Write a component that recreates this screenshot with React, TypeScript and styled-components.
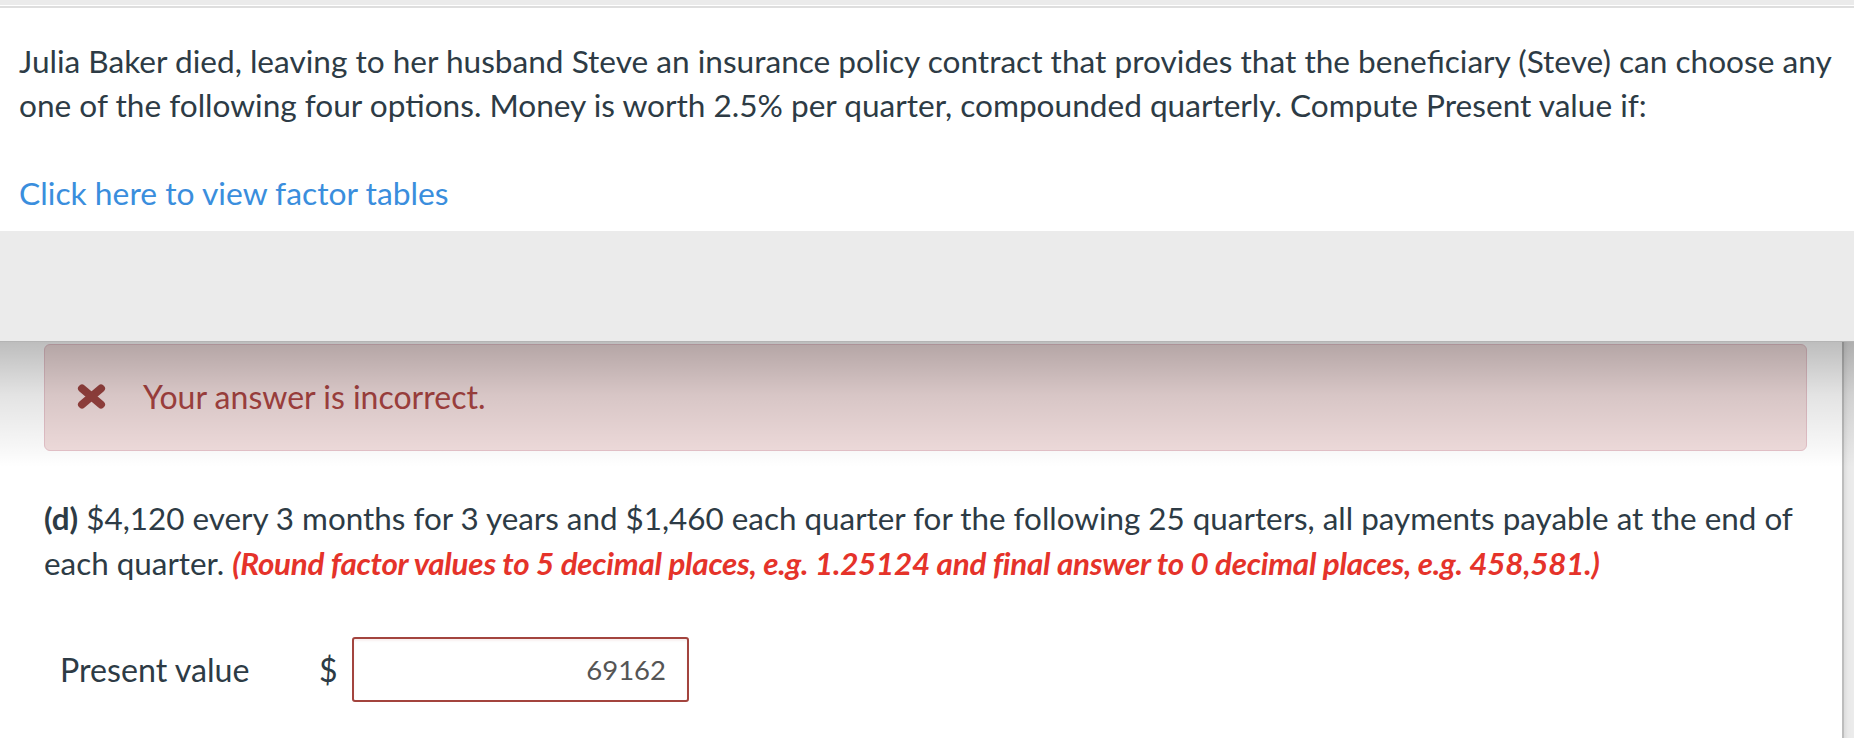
import React from "react";
import styled, { createGlobalStyle } from "styled-components";

const GlobalStyle = createGlobalStyle`
  html, body {
    margin: 0;
    padding: 0;
    background: #ffffff;
  }
  body {
    font-family: Lato, "Open Sans", "Liberation Sans", sans-serif;
    color: #2d3b45;
  }
  * { box-sizing: border-box; }
`;

const Page = styled.div`
  width: 1854px;
  height: 738px;
  overflow: hidden;
  display: flex;
  flex-direction: column;
`;

const TopStrip = styled.div`
  height: 6px;
  background: #ebebeb;
  border-bottom: 1px solid #ffffff;
`;

const Header = styled.section`
  border-top: 2px solid #dedede;
  padding: 31px 6px 16px 19px;
  background: #ffffff;
`;

const Paragraph = styled.p`
  margin: 0;
  font-size: 31.6px;
  line-height: 44px;
  color: #2d3b45;
`;

const Spacer = styled.div`
  height: 44px;
`;

const FactorLink = styled.a`
  font-size: 31.8px;
  line-height: 44px;
  color: #3a8edd;
  text-decoration: none;
  cursor: pointer;
`;

const GrayBand = styled.div`
  height: 111px;
  background: #ebebeb;
  border-bottom: 1px solid #b4b4b4;
`;

const Main = styled.div`
  position: relative;
  flex: 1;
  display: flex;
  min-height: 0;
`;

const Content = styled.div`
  flex: 1;
  padding: 2px 35px 0 44px;
`;

const Scrollbar = styled.div`
  width: 12px;
  background: linear-gradient(90deg, #dcdcdc 0, #e9e9e9 40%, #ececec 100%);
  border-left: 2px solid #bdbdbd;
`;

const ShadowOverlay = styled.div`
  position: absolute;
  top: 0;
  left: 0;
  right: 0;
  height: 125px;
  pointer-events: none;
  background: linear-gradient(
    180deg,
    rgba(0, 0, 0, 0.26) 0,
    rgba(0, 0, 0, 0.11) 53px,
    rgba(0, 0, 0, 0.03) 106px,
    rgba(0, 0, 0, 0) 125px
  );
`;

const ErrorBox = styled.div`
  height: 107px;
  display: flex;
  align-items: center;
  gap: 37px;
  padding: 0 0 2px 32px;
  background: #f2dede;
  border: 1px solid #e6c3ca;
  border-radius: 6px;
  color: #a94442;
  font-size: 32px;
`;

const ErrorIcon = styled.svg`
  width: 29px;
  height: 25px;
  flex: none;
`;

const Question = styled.p`
  margin: 45px 0 0 0;
  font-size: 31.4px;
  line-height: 45px;
  color: #2d3b45;
`;

const Strong = styled.strong`
  font-weight: 700;
`;

const Hint = styled.em`
  font-weight: 700;
  font-style: italic;
  color: #e5332a;
  letter-spacing: -0.25px;
`;

const AnswerRow = styled.div`
  margin-top: 51px;
  margin-left: 16px;
  display: flex;
  align-items: center;
`;

const AnswerLabel = styled.span`
  width: 259px;
  font-size: 32.2px;
  color: #2d3b45;
`;

const Currency = styled.span`
  font-size: 32px;
  color: #2d3b45;
  width: 33px;
`;

const AnswerInput = styled.input`
  width: 337px;
  height: 65px;
  border: 2px solid #a3443e;
  border-radius: 3px;
  background: #ffffff;
  box-shadow: inset 0 2px 2px rgba(169, 68, 66, 0.08);
  padding: 0 21px 0 10px;
  text-align: right;
  font-family: Lato, "Open Sans", "Liberation Sans", sans-serif;
  font-size: 27.5px;
  color: #555555;
  outline: none;
`;

export default function App() {
  return (
    <Page>
      <GlobalStyle />
      <TopStrip />
      <Header>
        <Paragraph>
          Julia Baker died, leaving to her husband Steve an insurance policy contract that provides that the
          beneficiary (Steve) can choose any one of the following four options. Money is worth 2.5% per quarter,
          compounded quarterly. Compute Present value if:
        </Paragraph>
        <Spacer />
        <FactorLink>Click here to view factor tables</FactorLink>
      </Header>
      <GrayBand />
      <Main>
        <Content>
          <ErrorBox>
            <ErrorIcon viewBox="0 0 29 25" aria-hidden="true">
              <path
                d="M5 4.5 L24 20.5 M24 4.5 L5 20.5"
                stroke="#9a4340"
                strokeWidth="8"
                strokeLinecap="round"
                fill="none"
              />
            </ErrorIcon>
            <span>Your answer is incorrect.</span>
          </ErrorBox>
          <Question>
            <Strong>(d)</Strong> $4,120 every 3 months for 3 years and $1,460 each quarter for the following 25
            quarters, all payments payable at the end of each quarter.{" "}
            <Hint>
              (Round factor values to 5 decimal places, e.g. 1.25124 and final answer to 0 decimal places, e.g.
              458,581.)
            </Hint>
          </Question>
          <AnswerRow>
            <AnswerLabel>Present value</AnswerLabel>
            <Currency>$</Currency>
            <AnswerInput readOnly value="69162" />
          </AnswerRow>
        </Content>
        <Scrollbar />
        <ShadowOverlay />
      </Main>
    </Page>
  );
}
